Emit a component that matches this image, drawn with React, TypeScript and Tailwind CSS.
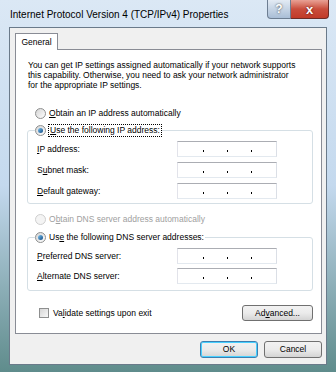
const font = { fontFamily: "'Liberation Sans', Arial, sans-serif" };

function Radio({ checked, disabled }: { checked?: boolean; disabled?: boolean }) {
  return (
    <span
      className={`inline-flex shrink-0 items-center justify-center w-[11px] h-[11px] rounded-full border ${
        disabled ? "border-[#cfcfcf] bg-[#f4f4f4]" : "border-[#8e8f8f] bg-gradient-to-br from-[#d4d4d4] to-[#ffffff]"
      }`}
    >
      {checked && <span className="w-[5px] h-[5px] rounded-full bg-gradient-to-br from-[#7cc4f0] to-[#0d4a84]" />}
    </span>
  );
}

function IpBox() {
  return (
    <div className="w-[100px] h-[16px] bg-white border border-[#abadb3] border-b-[#e3e9ef] border-l-[#e2e3ea] border-r-[#dbdfe6] flex items-center justify-center gap-[23px] pt-[4px]">
      <span className="w-[1px] h-[2px] bg-black" />
      <span className="w-[1px] h-[2px] bg-black" />
      <span className="w-[1px] h-[2px] bg-black" />
    </div>
  );
}

function Field({ label }: { label: React.ReactNode }) {
  return (
    <div className="flex items-center justify-between h-[16px]">
      <span className="text-black">{label}</span>
      <IpBox />
    </div>
  );
}

function Btn({ children, w, focused }: { children: React.ReactNode; w: string; focused?: boolean }) {
  return (
    <div
      className={`${w} rounded-[3px] border ${
        focused ? "border-[#3c7fb1] shadow-[inset_0_0_0_1px_#48d0ff]" : "border-[#707070]"
      } bg-gradient-to-b from-[#f2f2f2] via-[#ebebeb] to-[#d4d4d4] flex items-center justify-center text-black`}
    >
      {children}
    </div>
  );
}

export default function App() {
  return (
    <div
      style={font}
      className="w-[336px] h-[372px] flex flex-col bg-gradient-to-b from-[#dbe8f5] via-[#c4d9ee] to-[#5f8c8c] text-[8.5px] leading-[11px] overflow-hidden"
    >
      <div className="h-[27px] flex items-start justify-between pl-[10px] pr-[7px]">
        <span className="mt-[9px] text-[10px] text-black">Internet Protocol Version 4 (TCP/IPv4) Properties</span>
        <div className="flex">
          <div className="w-[24px] h-[19px] rounded-bl-[4px] border border-[#6d7e92] border-t-0 bg-gradient-to-b from-[#e3ebf4] to-[#a9bed6] flex items-center justify-center text-white font-bold text-[12px] [text-shadow:0_0_2px_#333]">
            ?
          </div>
          <div className="w-[38px] h-[19px] rounded-br-[4px] border border-[#6d2b25] border-t-0 border-l-0 bg-gradient-to-b from-[#e8a195] via-[#c94d3c] to-[#c13a28] flex items-center justify-center text-white font-bold text-[13px] [text-shadow:0_0_2px_#400]">
            x
          </div>
        </div>
      </div>

      <div className="flex-1 mx-[9px] mb-[7px] border border-[#6a7a8a] bg-[#f0f0f0] flex flex-col pl-[5px] pr-[4px] pt-[5px]">
        <div className="flex">
          <div className="relative z-10 -mb-[1px] h-[17px] w-[43px] bg-white border border-[#898c95] border-b-0 flex items-center justify-center text-black">
            General
          </div>
        </div>
        <div className="h-[285px] bg-white border border-[#898c95] pl-[11px] pr-[8px] pt-[10px] flex flex-col text-black">
          <p className="leading-[10px] ml-[1px] whitespace-nowrap">
            You can get IP settings assigned automatically if your network supports
            <br />
            this capability. Otherwise, you need to ask your network administrator
            <br />
            for the appropriate IP settings.
          </p>

          <div className="mt-[16px] ml-[8px] flex items-center gap-[3px] h-[14px]">
            <Radio />
            <span>
              <u>O</u>btain an IP address automatically
            </span>
          </div>

          <div className="mt-[10px] border border-[#d5dfe5] rounded-[3px] pl-[9px] pr-[35px] pt-[10px] pb-[4px] relative">
            <div className="absolute -top-[6px] left-[7px] bg-white flex items-center gap-[3px] pr-[1px]">
              <Radio checked />
              <span className="outline outline-1 outline-dotted outline-black px-[1px]">
                <u>U</u>se the following IP address:
              </span>
            </div>
            <div className="flex flex-col gap-[5px]">
              <Field label={<><u>I</u>P address:</>} />
              <Field label={<>S<u>u</u>bnet mask:</>} />
              <Field label={<><u>D</u>efault gateway:</>} />
            </div>
          </div>

          <div className="mt-[8px] ml-[8px] flex items-center gap-[3px] h-[14px] text-[#a0a0a0]">
            <Radio disabled />
            <span>
              O<u>b</u>tain DNS server address automatically
            </span>
          </div>

          <div className="mt-[11px] border border-[#d5dfe5] rounded-[3px] pl-[9px] pr-[35px] pt-[10px] pb-[6px] relative">
            <div className="absolute -top-[6px] left-[7px] bg-white flex items-center gap-[3px] pr-[1px]">
              <Radio checked />
              <span>
                Us<u>e</u> the following DNS server addresses:
              </span>
            </div>
            <div className="flex flex-col gap-[4px]">
              <Field label={<><u>P</u>referred DNS server:</>} />
              <Field label={<><u>A</u>lternate DNS server:</>} />
            </div>
          </div>

          <div className="mt-[14px] flex items-center justify-between">
            <div className="ml-[12px] flex items-center gap-[4px]">
              <span className="w-[10px] h-[10px] border border-[#8e8f8f] bg-gradient-to-br from-[#d6d6d6] to-[#f8f8f8]" />
              <span>
                Va<u>l</u>idate settings upon exit
              </span>
            </div>
            <Btn w="w-[71px] h-[16px]">
              Ad<u>v</u>anced...
            </Btn>
          </div>
        </div>
        <div className="flex justify-end gap-[6px] mt-[7px]">
          <Btn w="w-[58px] h-[17px]" focused>
            OK
          </Btn>
          <Btn w="w-[58px] h-[17px]">Cancel</Btn>
        </div>
      </div>
    </div>
  );
}
